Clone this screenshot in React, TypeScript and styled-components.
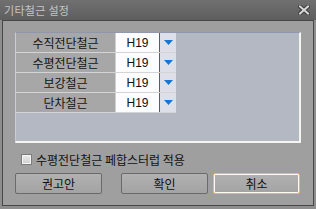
import styled, { createGlobalStyle } from "styled-components";

const GlobalStyle = createGlobalStyle`
  html, body {
    margin: 0;
    padding: 0;
    background: #8e8e8e;
  }
  * {
    box-sizing: border-box;
  }
`;

const rows = ["수직전단철근", "수평전단철근", "보강철근", "단차철근"];

const font = `"Noto Sans CJK KR", "Liberation Sans", sans-serif`;

export default function App() {
  return (
    <>
      <GlobalStyle />
      <Window>
        <TitleBar>
          <Title>기타철근 설정</Title>
          <CloseIcon />
        </TitleBar>
        <Frame>
          <Panel>
            {rows.map((name) => (
              <Row key={name}>
                <Label>{name}</Label>
                <Value>H19</Value>
                <DropButton>
                  <svg width="9" height="5" viewBox="0 0 9 5">
                    <path d="M0 0h9L4.5 5z" fill="#1677d2" />
                  </svg>
                </DropButton>
              </Row>
            ))}
          </Panel>
          <CheckRow>
            <CheckBox />
            <CheckLabel>수평전단철근 페합스터럽 적용</CheckLabel>
          </CheckRow>
          <ButtonRow>
            <Button>권고안</Button>
            <Button>확인</Button>
            <Button $focused>취소</Button>
          </ButtonRow>
        </Frame>
      </Window>
    </>
  );
}

const CloseIcon = () => (
  <svg width="12" height="10" viewBox="0 0 12 10">
    <path
      d="M2 1.5L10 8.5M10 1.5L2 8.5"
      stroke="#3c3c3c"
      strokeWidth="4"
      strokeLinecap="square"
    />
    <path
      d="M2 1.5L10 8.5M10 1.5L2 8.5"
      stroke="#d8d8d8"
      strokeWidth="2"
      strokeLinecap="square"
    />
  </svg>
);

const Window = styled.div`
  width: 316px;
  height: 209px;
  display: flex;
  flex-direction: column;
  background: #8e8e8e;
  font-family: ${font};
`;

const TitleBar = styled.div`
  height: 20px;
  display: flex;
  align-items: center;
  justify-content: space-between;
  padding: 0 6px 0 4px;
  background: linear-gradient(#707070, #5e5e5e);
`;

const Title = styled.span`
  font-size: 11px;
  color: #c4c4c4;
  letter-spacing: 0.3px;
`;

const Frame = styled.div`
  flex: 1;
  margin: 0 2px 3px 2px;
  border: 1px solid #474747;
  background: #9f9f9f;
  display: flex;
  flex-direction: column;
  padding: 11px 12px 0 12px;
`;

const Panel = styled.div`
  height: 111px;
  background: #b4b8c3;
  border-top: 1px solid #8e97ad;
  border-left: 1px solid #c9ccd4;
  border-right: 2px solid #f4f4f0;
  border-bottom: 2px solid #f4f4f0;
  display: flex;
  flex-direction: column;
`;

const Row = styled.div`
  display: grid;
  grid-template-columns: 100px 43px 17px;
  width: 160px;
  height: 20px;
  border-bottom: 1px solid #d4d4d4;
`;

const Label = styled.div`
  background: #a7a7a7;
  border-right: 1px solid #d0d0d0;
  display: flex;
  align-items: center;
  justify-content: center;
  font-size: 12px;
  color: #141414;
`;

const Value = styled.div`
  background: #fdfdff;
  display: flex;
  align-items: center;
  justify-content: center;
  font-size: 12px;
  color: #111;
  font-family: "Liberation Sans", sans-serif;
`;

const DropButton = styled.div`
  background: #dee0e9;
  border-left: 1px solid #1a6cc0;
  display: flex;
  align-items: center;
  justify-content: center;
`;

const CheckRow = styled.div`
  display: flex;
  align-items: center;
  gap: 4px;
  margin-top: 9px;
  padding-left: 6px;
  height: 14px;
`;

const CheckBox = styled.span`
  width: 11px;
  height: 11px;
  border: 1px solid #7c7c7c;
  background: linear-gradient(#ececec, #cfcfcf);
  box-shadow: inset 0 0 0 1px #f4f4f4;
`;

const CheckLabel = styled.span`
  font-size: 12px;
  color: #111;
  white-space: nowrap;
`;

const ButtonRow = styled.div`
  display: flex;
  gap: 5px;
  margin-top: 7px;

  & > :first-child {
    margin-right: 14px;
  }
`;

const Button = styled.div<{ $focused?: boolean }>`
  flex: none;
  width: 87px;
  height: 21px;
  display: flex;
  align-items: center;
  justify-content: center;
  font-size: 12px;
  color: #111;
  border-radius: 2px;
  background: linear-gradient(#b1b1b1, #a3a3a3);
  border: 1px solid ${(p) => (p.$focused ? "#eec22a" : "#6a6a6a")};
  box-shadow: ${(p) => (p.$focused ? "inset 0 0 0 1px #fbfbf4" : "none")};
`;
